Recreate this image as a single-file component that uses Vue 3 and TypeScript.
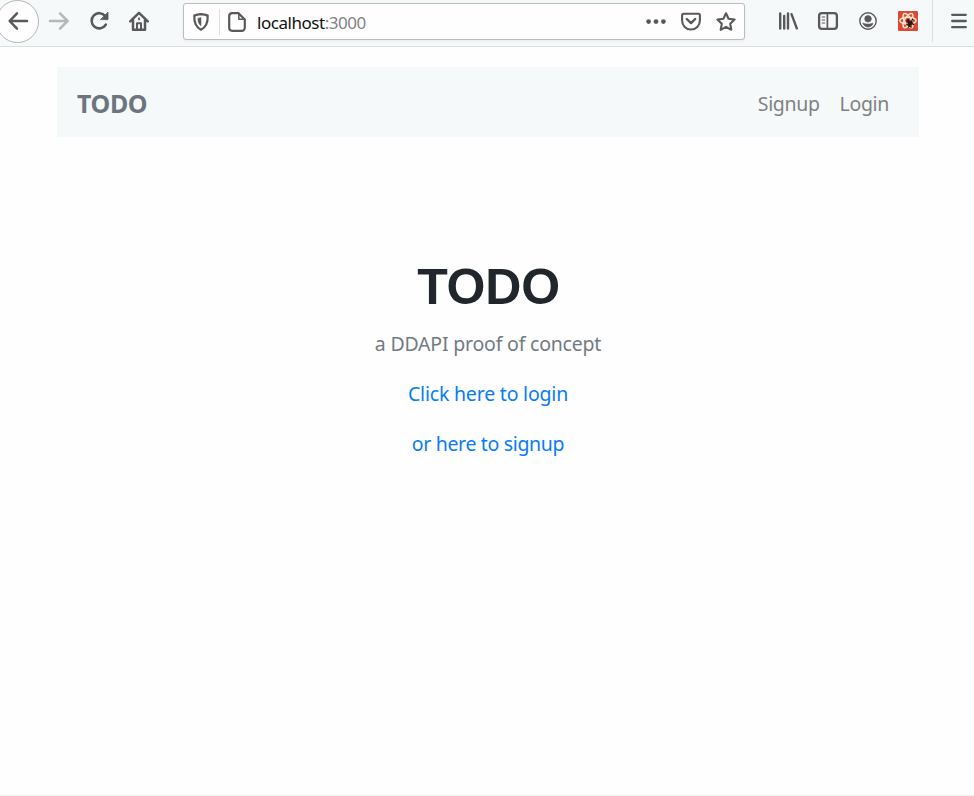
<script setup lang="ts">
import { ref } from 'vue'

interface NavItem {
  label: string
  href: string
}

const brand = ref<string>('TODO')
const navItems: NavItem[] = [
  { label: 'Signup', href: '#signup' },
  { label: 'Login', href: '#login' },
]
</script>

<template>
  <div class="window">
    <header class="toolbar">
      <div class="history">
        <button class="back" aria-label="Back">
          <svg width="20" height="20" viewBox="0 0 20 20" class="line"><path d="M19 10H2M9 2.4 1.6 10 9 17.6" stroke-width="2.5" /></svg>
        </button>
        <svg width="20" height="20" viewBox="0 0 20 20" class="line forward"><path d="M1 10h17M11 2.4 18.6 10 11 17.6" stroke-width="2.5" /></svg>
        <svg width="20" height="20" viewBox="0 0 20 20" class="line reload"><path d="M16.8 13.6A7.6 7.6 0 1 1 16.3 5.2" stroke-width="2.6" /><path class="solid" d="M19 1.4v7.2h-7.2z" stroke-width=".8" /></svg>
        <svg width="20" height="20" viewBox="0 0 20 20" class="line home"><path d="M1.2 10.4 10 1.8l8.8 8.6M4 9.3v9.5h12V9.3" stroke-width="2.5" /><path d="M8 18.4v-6.2h4v6.2" stroke-width="2" /><path d="M10 7.2v1.2" stroke-width="1.8" /></svg>
      </div>
      <div class="address">
        <svg width="16" height="18" viewBox="0 0 16 18" class="line shield"><path d="M8 1.2c2.3.2 4.6.6 6.7 1.4C15 9.1 13.3 14 8 16.7 2.7 14 1 9.1 1.3 2.6 3.4 1.8 5.7 1.4 8 1.2z" stroke-width="2.2" /><path class="solid" d="M8 4.8v7.9C5.5 11.1 4.9 8.7 4.9 5.5z" stroke-width=".5" /></svg>
        <span class="rule"></span>
        <svg width="18" height="20" viewBox="0 0 18 20" class="line page-icon"><path d="M10.5 1.2H4.2a3 3 0 0 0-3 3v11.6a3 3 0 0 0 3 3h9.6a3 3 0 0 0 3-3V7.5z" stroke-width="2.2" /><path d="M10.8 1.5v5.7h5.7" stroke-width="1.5" /></svg>
        <span class="url">localhost<span class="port">:3000</span></span>
        <div class="page-actions">
          <svg width="20" height="6" viewBox="0 0 20 6" class="fill"><circle cx="2.6" cy="2.6" r="2.4" /><circle cx="10" cy="2.6" r="2.4" /><circle cx="17.4" cy="2.6" r="2.4" /></svg>
          <svg width="20" height="18" viewBox="0 0 20 18" class="line pocket"><path d="M2.7.8h14.6a1.6 1.6 0 0 1 1.6 1.6v5.2a8.9 8.9 0 0 1-17.8 0V2.4A1.6 1.6 0 0 1 2.7.8z" stroke-width="2.1" /><path d="m5.8 6 4.2 4.1L14.2 6" stroke-width="2.4" /></svg>
          <svg width="20" height="20" viewBox="0 0 20 20" class="line star"><path d="m10 1.3 2.6 5.5 6 .8-4.4 4.2 1.1 6L10 14.9l-5.3 2.9 1.1-6L1.4 7.6l6-.8z" stroke-width="2.1" /></svg>
        </div>
      </div>
      <div class="tools">
        <svg width="20" height="18" viewBox="0 0 20 18" class="line library"><path d="M2.2 1.4v15.2M6.2 4v12.6M10 1.4v15.2M13.5 2.2l5.3 14.2" stroke-width="2.4" /></svg>
        <svg width="20" height="18" viewBox="0 0 20 18" class="line sidebar"><rect x="1.1" y="1.1" width="17.8" height="15.8" rx="2.8" stroke-width="2.3" /><path d="M9.4 2v14" stroke-width="1.7" /><path d="M4.2 5h2.5M4.2 8h2.5M4.2 11h2.5" stroke-width="1.2" /></svg>
        <svg width="18" height="18" viewBox="0 0 18 18" class="line account"><circle cx="9" cy="9" r="8.2" stroke-width="1.4" /><circle class="solid" cx="9" cy="6.8" r="3.3" stroke-width=".6" /><path class="solid" d="M4 11.3c1.3 0 2.3.8 5 .8s3.7-.8 5-.8c-.8 2.5-2.5 3.7-5 3.7s-4.2-1.2-5-3.7z" stroke-width=".6" /></svg>
        <svg width="20" height="20" viewBox="0 0 20 20" class="react"><rect width="20" height="20" rx="1.2" fill="#db4a34" /><g fill="none" stroke="#ffe2cf" stroke-width="1.5"><ellipse cx="10" cy="9.6" rx="8.2" ry="3.4" /><ellipse cx="10" cy="9.6" rx="8" ry="3.4" transform="rotate(60 10 9.6)" /><ellipse cx="10" cy="9.6" rx="8" ry="3.4" transform="rotate(120 10 9.6)" /></g><g stroke="#231c19" stroke-width="1.2" stroke-linecap="round"><path d="m8.6 13.2 4.6 3M9 10.6l6.6 2.8M10.6 16l3-6M14.2 9.2l.4-1.2" /><ellipse cx="12.2" cy="12.3" rx="1.5" ry="2.3" transform="rotate(45 12.2 12.3)" fill="#231c19" /><circle cx="10" cy="9.6" r="1" fill="#231c19" /></g></svg>
        <span class="divider"></span>
        <svg width="16" height="16" viewBox="0 0 16 16" class="line menu"><path d="M1.2 1.8h13.6M1.2 8h13.6M1.2 14.2h13.6" stroke-width="2.3" /></svg>
      </div>
    </header>
    <main class="page">
      <nav class="navbar">
        <a class="brand" href="#home">{{ brand }}</a>
        <div class="nav-links">
          <a v-for="item in navItems" :key="item.label" :href="item.href">{{ item.label }}</a>
        </div>
      </nav>
      <section class="hero">
        <h1>{{ brand }}</h1>
        <p class="tagline">a DDAPI proof of concept</p>
        <p><a class="to-login" href="#login">Click here to login</a></p>
        <p><a class="to-signup" href="#signup">or here to signup</a></p>
      </section>
    </main>
  </div>
</template>

<style>
body {
  background: #fefefe;
  overflow: hidden;
}
</style>

<style scoped>
.window {
  box-sizing: border-box;
  height: 796px;
  border-bottom: 1px solid #eeefef;
  background: #fefefe;
  font-family: 'Noto Sans', 'Open Sans', sans-serif;
}
.toolbar {
  box-sizing: border-box;
  display: flex;
  height: 47px;
  background: #f5f9fa;
  border-bottom: 1px solid #dcdfe0;
}
svg {
  display: block;
  flex: none;
  overflow: visible;
}
.line {
  fill: none;
  stroke: #59595b;
  stroke-linecap: round;
  stroke-linejoin: round;
}
.solid,
.fill {
  fill: #59595b;
}
.history {
  display: flex;
  align-items: center;
  width: 183px;
  height: 42px;
  flex: none;
}
.back {
  box-sizing: border-box;
  display: flex;
  align-items: center;
  justify-content: center;
  flex: none;
  width: 43px;
  height: 43px;
  margin-left: -4px;
  padding: 0;
  border: 1px solid #b2b4b5;
  border-radius: 50%;
  background: #fefefe;
}
.forward {
  margin-left: 10px;
  stroke: #b5b7b8;
}
.reload {
  margin-left: 20px;
}
.home {
  margin-left: 20px;
}
.address {
  box-sizing: border-box;
  display: flex;
  align-items: center;
  flex: none;
  width: 562px;
  height: 37px;
  margin-top: 3px;
  padding: 0 8px 0 9px;
  border: 1px solid #bbbdbe;
  border-radius: 3px;
  background: #fefefe;
  box-shadow: 0 1px 3px rgba(0, 0, 0, 0.06);
}
.rule {
  width: 1px;
  height: 26px;
  margin-left: 10px;
  background: #dedfe0;
}
.page-icon {
  margin-left: 8px;
}
.url {
  margin-left: 11px;
  padding-top: 2px;
  color: #111;
  font-size: 17px;
  line-height: 24px;
  letter-spacing: -0.46px;
}
.port {
  color: #808284;
}
.page-actions {
  display: flex;
  align-items: center;
  gap: 15px;
  margin-left: auto;
}
.tools {
  display: flex;
  align-items: center;
  height: 42px;
  margin-left: 33px;
}
.sidebar {
  margin-left: 20px;
}
.account,
.react {
  margin-left: 21px;
}
.divider {
  width: 1px;
  height: 42px;
  margin-left: 14px;
  background: #dcdfe0;
}
.menu {
  margin-left: 18px;
}
.page {
  padding: 20px 55px 0 57px;
}
.navbar {
  box-sizing: border-box;
  display: flex;
  align-items: center;
  justify-content: space-between;
  height: 70px;
  padding: 4px 30px 0 20px;
  background: #f5f9fa;
}
a {
  color: #087cf5;
  text-decoration: none;
}
.brand {
  padding-bottom: 2px;
  color: #6c757d;
  font-size: 25px;
  font-weight: 700;
  line-height: 34px;
  letter-spacing: -0.4px;
}
.nav-links {
  display: flex;
  gap: 20px;
}
.nav-links a {
  color: #7f8182;
  font-size: 19.5px;
  line-height: 30px;
  letter-spacing: -0.34px;
}
.hero {
  display: flex;
  flex-direction: column;
  align-items: center;
  padding-top: 120px;
}
h1 {
  margin: 0 0 12px;
  padding-left: 1px;
  color: #20262b;
  font-family: 'Liberation Sans', Arial, sans-serif;
  font-size: 50px;
  font-weight: 700;
  line-height: 60px;
  letter-spacing: -0.2px;
}
p {
  margin: 0 0 20px;
  color: #737b82;
  font-size: 19.5px;
  line-height: 30px;
  letter-spacing: -0.2px;
  white-space: nowrap;
}
.to-signup {
  letter-spacing: -0.33px;
}
</style>
